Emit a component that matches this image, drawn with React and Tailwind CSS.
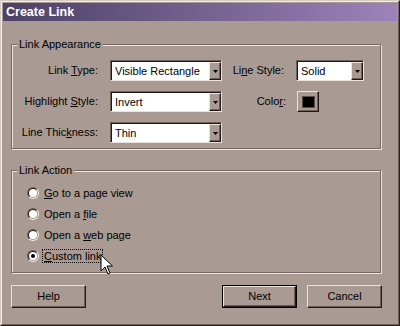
import React from 'react';

// Win2000-style "Create Link" dialog

const face = 'bg-[#a99b93]';

function Mn({ children }) {
  return <u className="underline underline-offset-[1px]">{children}</u>;
}

function Select({ value, width }) {
  return (
    <div
      className={`flex h-[21px] border border-t-[#6f605a] border-l-[#6f605a] border-r-[#ece4dc] border-b-[#ece4dc] shadow-[inset_1px_1px_0_#201818] bg-white ${width}`}
    >
      <div className="flex flex-1 items-center pl-[4px] pt-[1px]">{value}</div>
      <div className="mt-[1px] flex w-[12px] items-center justify-center border border-t-[#ece4dc] border-l-[#ece4dc] border-r-[#201818] border-b-[#201818] bg-[#a99b93] shadow-[inset_-1px_-1px_0_#6f605a]">
        <svg width="5" height="3" viewBox="0 0 5 3">
          <path d="M0 0h5L2.5 3z" fill="#000" />
        </svg>
      </div>
    </div>
  );
}

function Group({ title, className, children }) {
  return (
    <div
      className={`relative ml-[8px] w-[370px] border border-[#7a6a66] shadow-[inset_1px_1px_0_#ece4dc,1px_1px_0_#ece4dc] ${className}`}
    >
      <span className={`absolute -top-[8px] left-[5px] px-[2px] leading-[14px] ${face}`}>{title}</span>
      {children}
    </div>
  );
}

function Radio({ checked, children, focused }) {
  return (
    <div className="flex h-[21px] items-center pl-[15px]">
      <span className="flex h-[12px] w-[12px] rounded-full border border-t-[#6f605a] border-l-[#6f605a] border-r-[#f2ece6] border-b-[#f2ece6]">
        <span className="flex flex-1 items-center justify-center rounded-full border border-t-[#201818] border-l-[#201818] border-r-[#a99b93] border-b-[#a99b93] bg-white">
          {checked && <span className="h-[4px] w-[4px] rounded-full bg-black" />}
        </span>
      </span>
      <span
        className={`ml-[3px] px-[1px] leading-[12px] ${focused ? 'border border-dotted border-black' : 'border border-transparent'}`}
      >
        {children}
      </span>
    </div>
  );
}

function Button({ children, isDefault }) {
  const inner = (
    <div className="flex h-full w-full items-center justify-center border border-t-[#ece4dc] border-l-[#ece4dc] border-r-[#201818] border-b-[#201818] shadow-[inset_-1px_-1px_0_#6f605a]">
      {children}
    </div>
  );
  return (
    <div className={`h-[23px] w-[75px] ${isDefault ? 'border border-black' : ''}`}>{inner}</div>
  );
}

export default function App() {
  return (
    <div
      className={`h-[326px] w-[400px] overflow-hidden border border-t-[#d4ccc4] border-l-[#d4ccc4] border-r-[#2a2020] border-b-[#2a2020] text-[11px] text-black ${face}`}
      style={{ fontFamily: '"Liberation Sans", Arial, sans-serif' }}
    >
      <div className="relative flex h-full flex-col border border-t-[#f4eee8] border-l-[#f4eee8] border-r-[#6f605a] border-b-[#6f605a] p-[1px]">
        {/* title bar */}
        <div className="flex h-[18px] items-center bg-gradient-to-r from-[#4c4266] to-[#9d83b9] pl-[3px] text-[12.5px] font-bold text-white">
          Create Link
        </div>

        {/* Link Appearance */}
        <Group title="Link Appearance" className="mt-[23px] h-[105px] pt-[15px]">
          <div className="flex flex-col gap-[10px]">
            <div className="flex items-center">
              <div className="w-[86px] text-right">
                Link <Mn>T</Mn>ype:
              </div>
              <div className="ml-[12px]">
                <Select value="Visible Rectangle" width="w-[112px]" />
              </div>
              <div className="w-[62px] text-right">
                Li<Mn>n</Mn>e Style:
              </div>
              <div className="ml-[12px]">
                <Select value="Solid" width="w-[68px]" />
              </div>
            </div>
            <div className="flex items-center">
              <div className="w-[86px] text-right">
                Highlight <Mn>S</Mn>tyle:
              </div>
              <div className="ml-[12px]">
                <Select value="Invert" width="w-[112px]" />
              </div>
              <div className="w-[64px] text-right">
                Colo<Mn>r</Mn>:
              </div>
              <div className="ml-[11px] flex h-[21px] w-[22px] items-center justify-center border border-t-[#ece4dc] border-l-[#ece4dc] border-r-[#201818] border-b-[#201818] shadow-[inset_-1px_-1px_0_#6f605a]">
                <div className="h-[12px] w-[13px] border border-[#5a4c48] bg-black" />
              </div>
            </div>
            <div className="flex items-center">
              <div className="w-[86px] text-right">
                Line Thic<Mn>k</Mn>ness:
              </div>
              <div className="ml-[12px]">
                <Select value="Thin" width="w-[112px]" />
              </div>
            </div>
          </div>
        </Group>

        {/* Link Action */}
        <Group title="Link Action" className="mt-[21px] h-[103px] pt-[11px]">
          <Radio>
            <Mn>G</Mn>o to a page view
          </Radio>
          <Radio>
            Open a <Mn>f</Mn>ile
          </Radio>
          <Radio>
            Open a <Mn>w</Mn>eb page
          </Radio>
          <Radio checked focused>
            <Mn>C</Mn>ustom link
          </Radio>
        </Group>

        {/* buttons */}
        <div className="ml-[8px] mt-[12px] flex w-[371px] justify-between">
          <Button>Help</Button>
          <div className="flex gap-[10px]">
            <Button isDefault>Next</Button>
            <Button>Cancel</Button>
          </div>
        </div>

        {/* mouse pointer */}
        <svg
          className="absolute left-[98px] top-[252px]"
          width="14"
          height="22"
          viewBox="0 0 14 22"
        >
          <path
            d="M1 1v16l4-4 3 7 2-1-3-7h5.5z"
            fill="#fff"
            stroke="#000"
            strokeWidth="1"
            strokeLinejoin="miter"
          />
        </svg>
      </div>
    </div>
  );
}
